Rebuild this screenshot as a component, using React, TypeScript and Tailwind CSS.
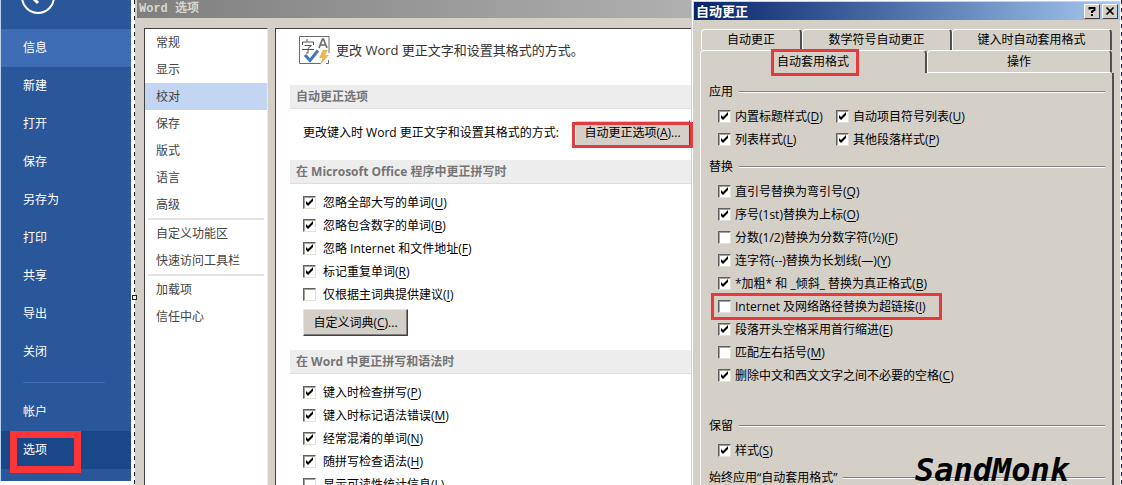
import { ReactNode } from "react";

type Option = { text: string; hotkey: string; checked?: boolean; marked?: boolean };

const backstage = ["信息", "新建", "打开", "保存", "另存为", "打印", "共享", "导出", "关闭"];

const categories = [
    ["常规", "显示", "校对", "保存", "版式", "语言", "高级"],
    ["自定义功能区", "快速访问工具栏"],
    ["加载项", "信任中心"],
];

const officeOptions: Option[] = [
    { text: "忽略全部大写的单词", hotkey: "U", checked: true },
    { text: "忽略包含数字的单词", hotkey: "B", checked: true },
    { text: "忽略 Internet 和文件地址", hotkey: "F", checked: true },
    { text: "标记重复单词", hotkey: "R", checked: true },
    { text: "仅根据主词典提供建议", hotkey: "I" },
];

const wordOptions: Option[] = [
    { text: "键入时检查拼写", hotkey: "P", checked: true },
    { text: "键入时标记语法错误", hotkey: "M", checked: true },
    { text: "经常混淆的单词", hotkey: "N", checked: true },
    { text: "随拼写检查语法", hotkey: "H", checked: true },
    { text: "显示可读性统计信息", hotkey: "L" },
];

const applyOptions: Option[] = [
    { text: "内置标题样式", hotkey: "D", checked: true },
    { text: "自动项目符号列表", hotkey: "U", checked: true },
    { text: "列表样式", hotkey: "L", checked: true },
    { text: "其他段落样式", hotkey: "P", checked: true },
];

const replaceOptions: Option[] = [
    { text: "直引号替换为弯引号", hotkey: "Q", checked: true },
    { text: "序号(1st)替换为上标", hotkey: "O", checked: true },
    { text: "分数(1/2)替换为分数字符(½)", hotkey: "F" },
    { text: "连字符(--)替换为长划线(—)", hotkey: "Y", checked: true },
    { text: "*加粗* 和 _倾斜_ 替换为真正格式", hotkey: "B", checked: true },
    { text: "Internet 及网络路径替换为超链接", hotkey: "I", marked: true },
    { text: "段落开头空格采用首行缩进", hotkey: "E", checked: true },
    { text: "匹配左右括号", hotkey: "M" },
    { text: "删除中文和西文文字之间不必要的空格", hotkey: "C", checked: true },
];

const Hotkey = ({ name }: { name: string }) => (
    <>(<span className="underline underline-offset-2">{name}</span>)</>
);

const CheckOption = ({ option, gap }: { option: Option; gap: string }) => (
    <label className={`relative flex h-[23px] w-fit items-center whitespace-nowrap ${gap}`}>
        <span className="relative block size-[13px]">
            <input
                type="checkbox"
                defaultChecked={option.checked}
                className="peer block size-[13px] appearance-none border border-t-[#606060] border-l-[#606060] border-r-[#e4e1da] border-b-[#e4e1da] bg-white shadow-[inset_1px_1px_0_#a5a29b]"
            />
            <svg viewBox="0 0 13 13" className="pointer-events-none absolute inset-0 hidden size-[13px] peer-checked:block">
                <path d="M3 5v3l2 2 5-5V2L5 7z" fill="#000" />
            </svg>
        </span>
        <span>{option.text}<Hotkey name={option.hotkey} /></span>
        {option.marked && <span className="pointer-events-none absolute -inset-y-0.5 -right-4 -left-[7px] border-3 border-[#e8393c]" />}
    </label>
);

const SectionTitle = ({ children }: { children: ReactNode }) => (
    <h2 className="flex h-6 items-center border-b border-[#dedede] bg-[#ededed] pl-1.5 font-bold text-[#757575]">{children}</h2>
);

const GroupTitle = ({ children }: { children: ReactNode }) => (
    <h3 className="flex h-4 items-center gap-1.5 whitespace-nowrap">
        {children}
        <span className="h-0.5 flex-1 border-t border-b border-t-[#808080] border-b-white" />
    </h3>
);

const DashedEdge = ({ children }: { children?: ReactNode }) => (
    <div className="relative w-px shrink-0 bg-[repeating-linear-gradient(to_bottom,#1c1c3a_0_4px,#ffffff_4px_8px)]">{children}</div>
);

const Backstage = () => (
    <nav className="mr-[3px] flex h-[481px] w-[131px] shrink-0 flex-col border-l border-[#b8d3f0] bg-[#2a579a] text-white">
        <div className="h-[29px]">
            <svg viewBox="0 0 34 14" className="ml-5 h-3.5 w-[34px]" fill="none" stroke="#fff">
                <circle cx="17" cy="-3" r="16" strokeWidth="2" />
                <path d="M17 3l-6-6M10 -3h14" strokeWidth="3" />
            </svg>
        </div>
        {backstage.map((item) => (
            <a key={item} href="#" className={`flex h-[38px] items-center pl-[22px] ${item === "信息" ? "bg-[#3e6db5]" : ""}`}>{item}</a>
        ))}
        <hr className="mt-[11px] mb-2.5 ml-[22px] w-[82px] border-[#406fb4]" />
        <a href="#" className="flex h-[38px] items-center pl-[22px]">帐户</a>
        <a href="#" className="relative flex h-[38px] items-center bg-[#1a4788] pl-[22px]">
            选项
            <span className="absolute top-0 left-[9px] h-[42px] w-[71px] border-7 border-[#fb3538]" />
        </a>
    </nav>
);

const ProofingIcon = () => (
    <svg viewBox="0 0 31 30" className="h-[30px] w-[31px]" fill="none">
        <path d="M30 17V.5H.5v27H22M29.500 24v3.500H27" stroke="#6b6b6b" />
        <path d="M8 3v2.500M3.500 9V6h11v3M5.500 9.500h7l-3.500 3M3 13.500h12M9 12.500v4.500H7" stroke="#555" />
        <path d="M20 12l3.500-9h1l3.500 9M21.500 9h5" stroke="#6b6b6b" strokeWidth="1.700" />
        <path d="M6 19l5 5.500L19 14.500" stroke="#3f78bd" strokeWidth="3" />
        <path d="M24 14h5l-3 5h4l-9 10 2.500-7H20z" fill="#eeb54e" />
    </svg>
);

const WordOptions = () => (
    <section className="flex min-w-0 flex-1 flex-col bg-[#d4d0c8] pl-0.5 text-black">
        <h1 className="h-[18px] bg-linear-to-r from-[#7f7f7f] to-[#b0b0b0] pl-0.5 font-['Liberation_Mono','Noto_Sans_CJK_SC',monospace] leading-[18px] font-bold text-[#dad7d0]">Word 选项</h1>
        <div className="flex flex-1 gap-[7px] pt-2.5 pl-[7px]">
            <nav className="w-[124px] shrink-0 border-t border-r border-l border-t-[#404040] border-r-[#ece9e2] border-l-[#404040] bg-white text-[#444444]">
                {categories.map((group, i) => (
                    <div key={i}>
                        {i > 0 && <hr className="mx-[3px] border-t-2 border-[#e3e3e3]" />}
                        {group.map((item) => (
                            <a key={item} href="#" className={`flex h-[27px] items-center pl-[11px] ${item === "校对" ? "bg-[#c2d5f2]" : ""}`}>{item}</a>
                        ))}
                    </div>
                ))}
            </nav>
            <div className="min-w-0 flex-1 border-t border-l border-[#404040] bg-white pl-3.5 whitespace-nowrap">
                <div className="flex h-14 items-center gap-1.5 pb-3 pl-[9px] text-[13px] text-[#333333]">
                    <ProofingIcon />
                    更改 Word 更正文字和设置其格式的方式。
                </div>
                <SectionTitle>自动更正选项</SectionTitle>
                <div className="flex h-[51px] items-center justify-between pr-px pb-1 pl-[13px]">
                    更改键入时 Word 更正文字和设置其格式的方式:
                    <div className="relative z-10">
                        <button type="button" className="h-[26px] w-[115px] border border-t-white border-r-[#404040] border-b-[#404040] border-l-white bg-[#d4d0c8]">自动更正选项<Hotkey name="A" />...</button>
                        <span className="pointer-events-none absolute -inset-x-[3px] top-0.5 -bottom-0.5 border-3 border-[#e23b40]" />
                    </div>
                </div>
                <SectionTitle>在 Microsoft Office 程序中更正拼写时</SectionTitle>
                <div className="pt-[7px] pb-3.5 pl-[13px]">
                    {officeOptions.map((option) => <CheckOption key={option.hotkey} option={option} gap="gap-[7px]" />)}
                    <button type="button" className="mt-[3px] block h-[27px] w-[105px] border border-t-[#e8e5de] border-r-[#404040] border-b-[#404040] border-l-[#e8e5de] bg-[#d4d0c8] shadow-[inset_-1px_-1px_0_#808080]">自定义词典<Hotkey name="C" />...</button>
                </div>
                <SectionTitle>在 Word 中更正拼写和语法时</SectionTitle>
                <div className="pt-[7px] pl-[13px]">
                    {wordOptions.map((option) => <CheckOption key={option.hotkey} option={option} gap="gap-[7px]" />)}
                </div>
            </div>
        </div>
    </section>
);

const tab = "rounded-t-sm border-t border-l border-r-2 border-t-white border-l-white border-r-[#505050]";
const titleButton = "flex h-[15px] w-4 items-center justify-center border border-t-white border-r-[#404040] border-b-[#404040] border-l-white bg-[#d4d0c8] text-black";

const AutoCorrect = () => (
    <section className="relative flex w-[429px] shrink-0 flex-col border-l border-[#d4d0c8] bg-[#d4d0c8] text-black">
        <div className="flex flex-1 flex-col border-t border-l border-white pt-px pl-px">
            <header className="flex h-[18px] items-center bg-linear-to-r from-[#0a246a] to-[#a6caf0] pr-0.5 pl-0.5 text-white">
                <h1 className="flex-1 text-[13px] leading-[18px] font-bold">自动更正</h1>
                <div className="flex gap-0.5">
                    <button type="button" aria-label="Help" className={titleButton}>
                        <svg viewBox="0 0 10 10" className="size-2.5" fill="none" stroke="#000" strokeWidth="2">
                            <path d="M2.500 3.500V2h5v2L5 5.500V7M5 8v2" />
                        </svg>
                    </button>
                    <button type="button" aria-label="Close" className={titleButton}>
                        <svg viewBox="0 0 10 10" className="size-2.5" stroke="#000" strokeWidth="1.700">
                            <path d="M1.500 1.500l7 7M8.500 1.500l-7 7" />
                        </svg>
                    </button>
                </div>
            </header>
            <div className="flex flex-1 flex-col pt-[9px] pr-[6px] pl-1.5">
                <div role="tablist">
                    <div className="mr-0.5 ml-px flex h-[21px]">
                        <button type="button" role="tab" className={`w-[101px] ${tab}`}>自动更正</button>
                        <button type="button" role="tab" className={`w-[150px] ${tab}`}>数学符号自动更正</button>
                        <button type="button" role="tab" className={`flex-1 ${tab}`}>键入时自动套用格式</button>
                    </div>
                    <div className="mr-0.5 flex h-[23px]">
                        <button type="button" role="tab" aria-selected="true" className={`relative w-[227px] ${tab}`}>
                            自动套用格式
                            <span className="pointer-events-none absolute -top-0.5 left-[70px] h-[27px] w-[88px] border-3 border-[#e8393c]" />
                        </button>
                        <button type="button" role="tab" className={`flex-1 border-b border-b-white ${tab}`}>操作</button>
                    </div>
                </div>
                <div className="flex-1 border-r-2 border-l border-r-[#505050] border-l-white pt-[11px] pr-[7px] pl-2">
                    <GroupTitle>应用</GroupTitle>
                    <div className="grid grid-cols-[118px_1fr] pt-[5px] pb-2 pl-[9px]">
                        {applyOptions.map((option) => <CheckOption key={option.hotkey} option={option} gap="gap-1" />)}
                    </div>
                    <GroupTitle>替换</GroupTitle>
                    <div className="pt-[5px] pb-[31px] pl-[9px]">
                        {replaceOptions.map((option) => <CheckOption key={option.hotkey} option={option} gap="gap-1" />)}
                    </div>
                    <GroupTitle>保留</GroupTitle>
                    <div className="pt-[5px] pb-2 pl-[9px]">
                        <CheckOption option={{ text: "样式", hotkey: "S", checked: true }} gap="gap-1" />
                    </div>
                    <GroupTitle>始终应用“自动套用格式”</GroupTitle>
                </div>
            </div>
        </div>
        <span className="absolute top-[450px] right-[51px] font-['DejaVu_Sans_Mono',monospace] text-[32px] leading-10 font-bold italic">SandMonk</span>
    </section>
);

const App = () => {
    return (
        <main className="flex h-screen overflow-hidden bg-white font-['Open_Sans','Noto_Sans_CJK_SC',sans-serif] text-xs">
            <Backstage />
            <DashedEdge>
                <span className="absolute top-[295px] -left-0.5 size-[5px] border border-[#222222] bg-white" />
            </DashedEdge>
            <WordOptions />
            <AutoCorrect />
            <div className="w-px shrink-0" />
            <DashedEdge />
        </main>
    )
}

export default App
